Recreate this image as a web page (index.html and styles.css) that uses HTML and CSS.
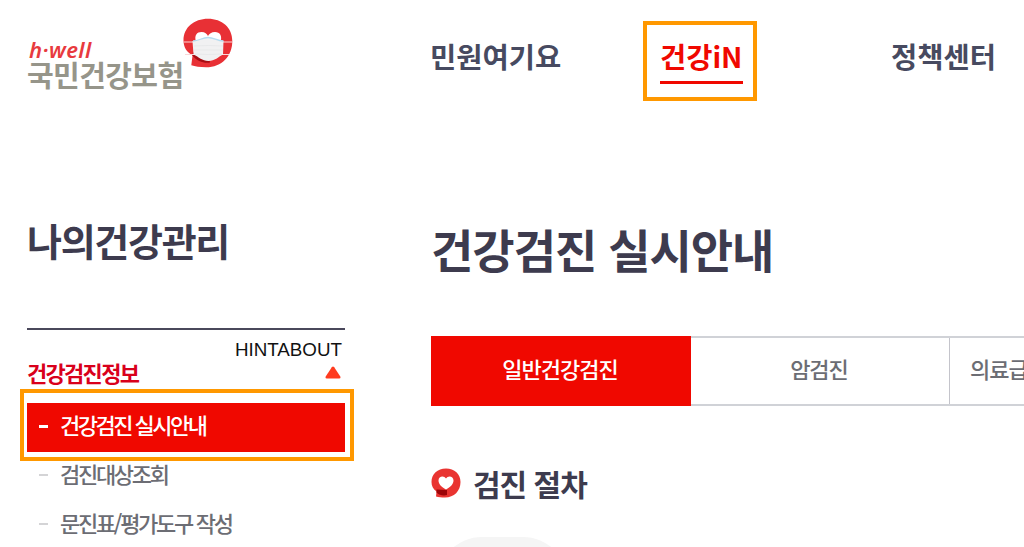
FILE: index.html
```html
<!DOCTYPE html>
<html lang="ko">

<head>
    <meta charset="UTF-8">
    <meta name="viewport" content="width=device-width, initial-scale=1.0">
    <link rel="stylesheet" href="styles.css">
    <title>건강검진 실시안내</title>
</head>

<body>

    <header>
        <a href="#" class="logo">
            <span class="logo-text">
                <span class="logo-en">h·well</span>
                <span class="logo-ko">국민건강보험</span>
            </span>
            <svg class="logo-mark" viewBox="0 0 50 50" width="50" height="50">
                <path fill="#e83035" d="M25 .8C39 .8 49.300 9.500 49.300 23C49.300 38 39 49.300 23 49.300C17 49.300 12 48.500 8.300 47.300L9.500 37.500C3.500 34 .5 29 .5 22.500C.5 9.500 11 .8 25 .8Z" />
                <path fill="#a80c12" d="M9.500 37.500C14 43.500 21 45.500 27 44.500L26 40L10 34Z" />
                <path fill="#fff" d="M13 24C11 17 14 14 18.500 14C22 14 24 16 25 18C26 16 28.500 14 32 14C37 14 39.500 18 37.500 24Z" />
                <path fill="none" stroke="#fbd5d6" stroke-width="1.200" d="M.8 24H10M40 24H49M2 36.500H12M39 36.500H46" />
                <path fill="#f1f1f2" d="M9.500 23C16 23 19 19.500 25 19.500C31 19.500 34 23 40.500 23L40 36.500C35 39 32 43 25.500 43C19 43 16 39 10.500 36.500Z" />
                <path fill="none" stroke="#b5dcf0" stroke-width="1.300" d="M10 23C16 23 19 19.500 25 19.500C31 19.500 34 23 40.500 23" />
                <path fill="none" stroke="#e4e5e7" stroke-width=".7" d="M11 28Q25 27 40 28M11 32Q25 32 40 32M12 36Q25 37 39 36" />
            </svg>
        </a>
        <nav>
            <a href="#">민원여기요</a>
            <a href="#" class="active"><span>건강iN</span></a>
            <a href="#">정책센터</a>
        </nav>
    </header>

    <div class="container">
        <aside>
            <h2>나의건강관리</h2>
            <div class="side-menu">
                <p class="hint">HINTABOUT</p>
                <h3>건강검진정보
                    <svg class="arrow" viewBox="0 0 16 13" width="16" height="13">
                        <path fill="#ff3b1f" d="M6.800 1.200Q8 -.4 9.200 1.200L15.300 10.500Q16 12.500 14.200 12.500H1.800Q0 12.500 .7 10.500Z" />
                    </svg>
                </h3>
                <ul>
                    <li class="active"><a href="#">건강검진 실시안내</a></li>
                    <li><a href="#">검진대상조회</a></li>
                    <li><a href="#">문진표/평가도구 작성</a></li>
                </ul>
            </div>
        </aside>

        <main>
            <h1>건강검진 실시안내</h1>
            <ul class="tabs">
                <li class="active"><a href="#">일반건강검진</a></li>
                <li><a href="#">암검진</a></li>
                <li class="last"><a href="#">의료급여</a></li>
            </ul>
            <h4>
                <svg viewBox="0 0 30 30" width="30" height="30">
                    <path fill="#e93431" d="M15 .5C23.500 .5 29.500 6 29.500 14C29.500 23 23 29.500 14 29.500C10.500 29.500 7.500 29.200 5 28.500L5.500 23.500C2 21 .5 18 .5 14C.5 6 6.500 .5 15 .5Z" />
                    <path fill="#9c0408" d="M5.500 21.500L16 22V27C12 28 8 27 5.500 24.500Z" />
                    <path fill="#fff" d="M15 21.500C10.500 19 7.500 16 7.500 12.500C7.500 8 13 7 15 10.500C17 7 22.500 8 22.500 12.500C22.500 16 19.500 19 15 21.500Z" />
                </svg>
                검진 절차
            </h4>
            <div class="step"></div>
        </main>
    </div>

</body>

</html>
```
FILE: styles.css
```css
* {
    box-sizing: border-box;
}

body {
    font-family: "Noto Sans CJK KR", sans-serif;
    margin: 0;
    height: 547px;
    overflow: hidden;
    background-color: #fff;
    color: #3d3b4e;
}

h1, h2, h3, h4, p, ul {
    margin: 0;
    padding: 0;
}

ul {
    list-style: none;
}

a {
    color: inherit;
    text-decoration: none;
    white-space: nowrap;
}

header {
    display: flex;
    height: 216px;
    padding-left: 27px;
}

/* logo */
.logo {
    display: flex;
    flex: none;
    width: 403px;
    padding-top: 18px;
}

.logo-text {
    display: flex;
    flex-direction: column;
    width: 156px;
    padding-top: 20px;
}

.logo-en {
    padding-left: 2px;
    font: italic 600 22px/23px "Noto Sans", sans-serif;
    letter-spacing: 0.4px;
    color: #e83a3e;
}

.logo-ko {
    font-size: 29px;
    font-weight: bold;
    line-height: 26px;
    letter-spacing: -0.6px;
    color: #96958a;
}

/* top menu */
nav {
    display: flex;
    flex: none;
    padding-top: 21px;
    font-size: 28.5px;
    font-weight: bold;
    line-height: 40px;
    color: #474a60;
}

nav a {
    width: 213px;
    height: 80px;
    padding-top: 15px;
}

nav a:last-child {
    width: 130px;
}

nav a.active {
    width: 114px;
    margin-right: 134px;
    padding: 11px 13px;
    border: 4px solid #ff9800;
    color: #f00800;
}

nav .active span {
    display: block;
    width: 83px;
    height: 48px;
    border-bottom: 3px solid #f00800;
}

.container {
    display: flex;
}

/* left menu */
aside {
    width: 318px;
    margin: 0 86px 0 27px;
}

aside h2 {
    height: 112px;
    font-size: 38px;
    line-height: 48px;
    letter-spacing: -1.3px;
}

.side-menu {
    border-top: 2px solid #4a485b;
}

.hint {
    padding: 9px 3px 0 0;
    font: 18.8px/22px "Liberation Sans", Arial, sans-serif;
    text-align: right;
    color: #111;
}

aside h3 {
    display: flex;
    justify-content: space-between;
    height: 42px;
    padding-right: 4px;
    font-size: 22px;
    line-height: 22px;
    letter-spacing: -1.7px;
    color: #d9001b;
}

.arrow {
    margin-top: 5px;
}

aside li {
    position: relative;
    display: flex;
    align-items: center;
    height: 49px;
    padding-left: 12px;
    font-size: 22px;
    font-weight: 500;
    line-height: 42px;
    letter-spacing: -2.3px;
    color: #6c6d74;
}

aside li a {
    height: 49px;
}

aside li::before {
    content: "";
    width: 9px;
    height: 2px;
    margin: 0 12px 3px 0;
    background-color: #d4d4d6;
}

aside li.active {
    background-color: #f00800;
    letter-spacing: -2.5px;
    color: #fff;
}

aside li.active::before {
    height: 3px;
    background-color: #fff;
}

/* highlight frame around the current item */
aside li.active::after {
    content: "";
    position: absolute;
    inset: -14px -9px -9px -7px;
    border: 4px solid #ff9800;
}

/* content */
main {
    width: 593px;
    overflow: hidden;
}

h1 {
    height: 120px;
    font-size: 46px;
    line-height: 64px;
    letter-spacing: -1px;
}

.tabs {
    display: flex;
    width: 780px;
    height: 70px;
    border-top: 2px solid #d0d2d7;
    border-bottom: 2px solid #d0d2d7;
    font-size: 22px;
    font-weight: 500;
    line-height: 61px;
    letter-spacing: -1px;
    text-align: center;
    color: #6c6d74;
}

.tabs li {
    width: 259px;
    padding-right: 2px;
    border-right: 1px solid #c4c4cb;
}

.tabs li.active {
    width: 260px;
    margin: -2px 0;
    padding-top: 2px;
    border: 0;
    background-color: #f00800;
    color: #fff;
}

.tabs li.last {
    padding-left: 20px;
    text-align: left;
}

h4 {
    display: flex;
    align-items: center;
    gap: 12px;
    height: 44px;
    margin-top: 55px;
    font-size: 30px;
    font-weight: bold;
    line-height: 42px;
    letter-spacing: -1px;
}

.step {
    width: 131px;
    height: 131px;
    margin: 32px 0 0 6px;
    border-radius: 45px;
    background-color: #f5f5f5;
}
```
